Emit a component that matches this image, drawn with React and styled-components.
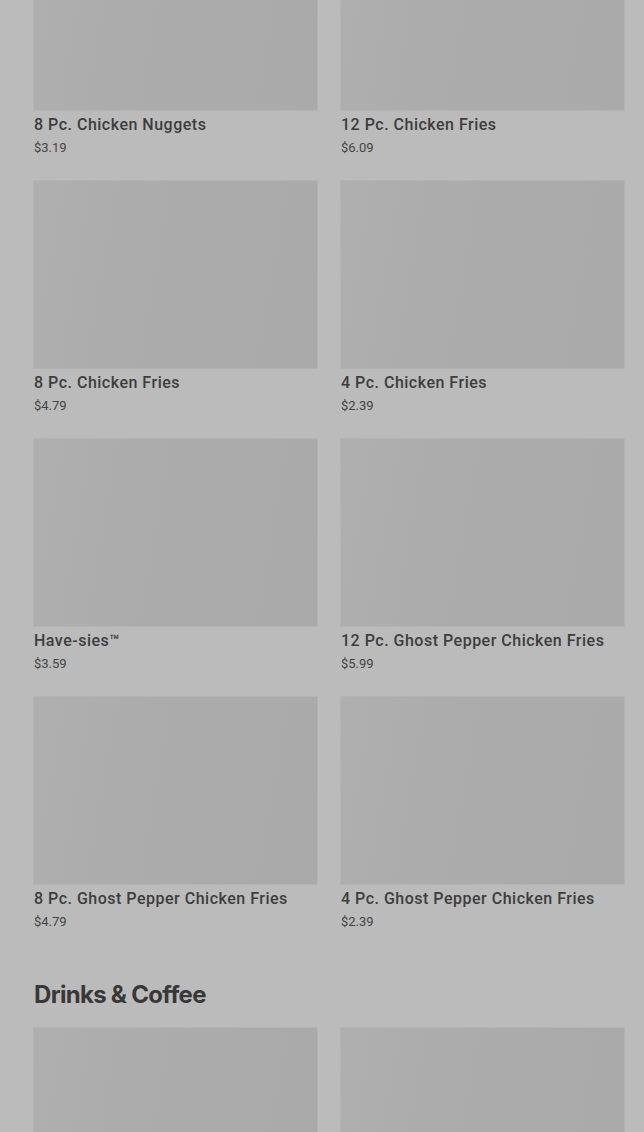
import React from "react";
import styled, { createGlobalStyle } from "styled-components";

const Global = createGlobalStyle`
  html, body { margin: 0; padding: 0; background: #bbbbbb; }
  body { font-family: Roboto, "Liberation Sans", sans-serif; overflow: hidden; }
`;

const Viewport = styled.div`
  height: 1132px;
  overflow: hidden;
`;

const Scroller = styled.div`
  margin-top: -77px;
`;

const Section = styled.section`
  padding: 0 20px 0 34px;
`;

const Heading = styled.h2`
  margin: 48px 0 17px;
  font-family: Inter, "Noto Sans", sans-serif;
  font-weight: 700;
  font-size: 24px;
  line-height: 32px;
  letter-spacing: -0.7px;
  color: #383838;
`;

const Grid = styled.div`
  display: grid;
  grid-template-columns: 1fr 1fr;
  column-gap: 24px;
  row-gap: 24px;
`;

const Card = styled.div`
  display: flex;
  flex-direction: column;
`;

const Thumb = styled.div`
  height: 187px;
  background: linear-gradient(100deg, #afafaf 0%, #ababab 45%, #aaaaaa 100%);
  box-shadow: 0 0 0 1px #b3b3b3;
`;

const Name = styled.div`
  margin-top: 2px;
  font-size: 16px;
  line-height: 26px;
  font-weight: 500;
  letter-spacing: 0.5px;
  color: #3d3d3d;
  white-space: nowrap;
`;

const Price = styled.div`
  font-size: 13px;
  line-height: 19px;
  color: #444444;
`;

const sides = [
  ["8 Pc. Chicken Nuggets", "$3.19"],
  ["12 Pc. Chicken Fries", "$6.09"],
  ["8 Pc. Chicken Fries", "$4.79"],
  ["4 Pc. Chicken Fries", "$2.39"],
  ["Have-sies™", "$3.59"],
  ["12 Pc. Ghost Pepper Chicken Fries", "$5.99"],
  ["8 Pc. Ghost Pepper Chicken Fries", "$4.79"],
  ["4 Pc. Ghost Pepper Chicken Fries", "$2.39"],
];

const drinks = [
  ["Coca-Cola®", "$1.99"],
  ["Diet Coke®", "$1.99"],
];

function Item({ name, price }) {
  return (
    <Card>
      <Thumb />
      <Name>{name}</Name>
      <Price>{price}</Price>
    </Card>
  );
}

export default function App() {
  return (
    <Viewport>
      <Global />
      <Scroller>
        <Section>
          <Grid>
            {sides.map(([n, p]) => (
              <Item key={n} name={n} price={p} />
            ))}
          </Grid>
        </Section>
        <Section>
          <Heading>Drinks &amp; Coffee</Heading>
          <Grid>
            {drinks.map(([n]) => (
              <Thumb key={n} />
            ))}
          </Grid>
        </Section>
      </Scroller>
    </Viewport>
  );
}
